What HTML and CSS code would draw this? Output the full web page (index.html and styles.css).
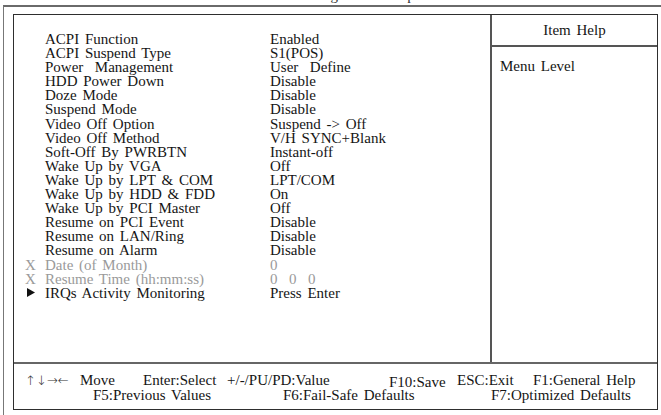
FILE: index.html
```html
<!DOCTYPE html>
<html>
<head>
<meta charset="utf-8">
<link rel="stylesheet" href="styles.css">
</head>
<body>
<div class="title">Power Management Setup</div>
<div class="frame">
  <div class="box">
    <div class="main">
      <div class="list">
        <div class="row"><span class="mark"></span><span class="label">ACPI Function</span><span class="value">Enabled</span></div>
        <div class="row"><span class="mark"></span><span class="label">ACPI Suspend Type</span><span class="value">S1(POS)</span></div>
        <div class="row"><span class="mark"></span><span class="label">Power&nbsp; Management</span><span class="value">User&nbsp; Define</span></div>
        <div class="row"><span class="mark"></span><span class="label">HDD Power Down</span><span class="value">Disable</span></div>
        <div class="row"><span class="mark"></span><span class="label">Doze Mode</span><span class="value">Disable</span></div>
        <div class="row"><span class="mark"></span><span class="label">Suspend Mode</span><span class="value">Disable</span></div>
        <div class="row"><span class="mark"></span><span class="label">Video Off Option</span><span class="value">Suspend -&gt; Off</span></div>
        <div class="row"><span class="mark"></span><span class="label">Video Off Method</span><span class="value">V/H SYNC+Blank</span></div>
        <div class="row"><span class="mark"></span><span class="label">Soft-Off By PWRBTN</span><span class="value">Instant-off</span></div>
        <div class="row"><span class="mark"></span><span class="label">Wake Up by VGA</span><span class="value">Off</span></div>
        <div class="row"><span class="mark"></span><span class="label">Wake Up by LPT &amp; COM</span><span class="value">LPT/COM</span></div>
        <div class="row"><span class="mark"></span><span class="label">Wake Up by HDD &amp; FDD</span><span class="value">On</span></div>
        <div class="row"><span class="mark"></span><span class="label">Wake Up by PCI Master</span><span class="value">Off</span></div>
        <div class="row"><span class="mark"></span><span class="label">Resume on PCI Event</span><span class="value">Disable</span></div>
        <div class="row"><span class="mark"></span><span class="label">Resume on LAN/Ring</span><span class="value">Disable</span></div>
        <div class="row"><span class="mark"></span><span class="label">Resume on Alarm</span><span class="value">Disable</span></div>
        <div class="row dim"><span class="mark">X</span><span class="label">Date (of Month)</span><span class="value">0</span></div>
        <div class="row dim"><span class="mark">X</span><span class="label">Resume Time (hh:mm:ss)</span><span class="value">0&nbsp; 0&nbsp; 0</span></div>
        <div class="row"><span class="mark"><svg class="tri" width="8" height="9" viewBox="0 0 8 9"><polygon points="0,0 8,4.5 0,9" fill="#111"/></svg></span><span class="label">IRQs Activity Monitoring</span><span class="value">Press Enter</span></div>
      </div>
      <div class="help">
        <div class="help-head">Item Help</div>
        <div class="help-body">Menu Level</div>
      </div>
    </div>
    <div class="footer">
      <div class="fline one">
        <span class="k k-move"><span class="arrows">↑↓→←</span>Move</span>
        <span class="k k-enter">Enter:Select</span>
        <span class="k k-value">+/-/PU/PD:Value</span>
        <span class="k k-save">F10:Save</span>
        <span class="k k-esc">ESC:Exit</span>
        <span class="k">F1:General Help</span>
      </div>
      <div class="fline two">
        <span class="k k-f5">F5:Previous Values</span>
        <span class="k k-f6">F6:Fail-Safe Defaults</span>
        <span class="k">F7:Optimized Defaults</span>
      </div>
    </div>
  </div>
</div>
</body>
</html>
```
FILE: styles.css
```css
html, body {
  margin: 0;
  padding: 0;
  background: #fff;
}
body {
  width: 661px;
  height: 415px;
  overflow: hidden;
  font-family: "Liberation Serif", "Times New Roman", serif;
  font-size: 15px;
  letter-spacing: 0;
  word-spacing: 2px;
  color: #151515;
}
.title {
  height: 14px;
  line-height: 14px;
  margin-top: -12px;
  margin-bottom: 3px;
  text-align: center;
  padding-left: 6px;
  color: #333;
}
.frame {
  margin-left: 3px;
  border-top: 2px solid #6a6a6a;
  border-left: 1px solid #777;
  padding: 7px 0 0 9px;
  height: 410px;
  box-sizing: border-box;
}
.box {
  width: 645px;
  height: 396px;
  box-sizing: border-box;
  border: 1px solid #2e2e2e;
  display: flex;
  flex-direction: column;
}
.main {
  display: flex;
  height: 347px;
}
.list {
  width: 476px;
  padding: 17px 0 0 11px;
  box-sizing: border-box;
}
.row {
  display: flex;
  height: 14.1px;
  line-height: 14.1px;
  white-space: nowrap;
}
.mark {
  width: 20px;
  display: flex;
  align-items: center;
}
.label {
  width: 225px;
}
.dim {
  color: #9a9a9a;
}
.tri {
  margin-left: 2px;
}
.help {
  flex: 1;
  border-left: 2px solid #555;
  display: flex;
  flex-direction: column;
}
.help-head {
  height: 32px;
  line-height: 31px;
  text-align: center;
  border-bottom: 2px solid #555;
  box-sizing: border-box;
}
.help-body {
  padding: 12px 0 0 8px;
  line-height: 14px;
}
.footer {
  flex: 1;
  border-top: 2px solid #666;
  padding-top: 9px;
  box-sizing: border-box;
}
.fline {
  display: flex;
  height: 15px;
  line-height: 15px;
  white-space: nowrap;
}
.one {
  padding-left: 11px;
}
.two {
  padding-left: 79px;
}
.arrows {
  display: inline-block;
  width: 55px;
  font-family: "DejaVu Sans", sans-serif;
  font-size: 13px;
  font-weight: 300;
  letter-spacing: 0;
  color: #333;
}
.k-move { width: 118px; }
.k-enter { width: 84px; }
.k-value { width: 162px; }
.k-save { width: 68px; position: relative; top: 2px; }
.k-esc { width: 76px; }
.k-f5 { width: 190px; }
.k-f6 { width: 208px; }
```
